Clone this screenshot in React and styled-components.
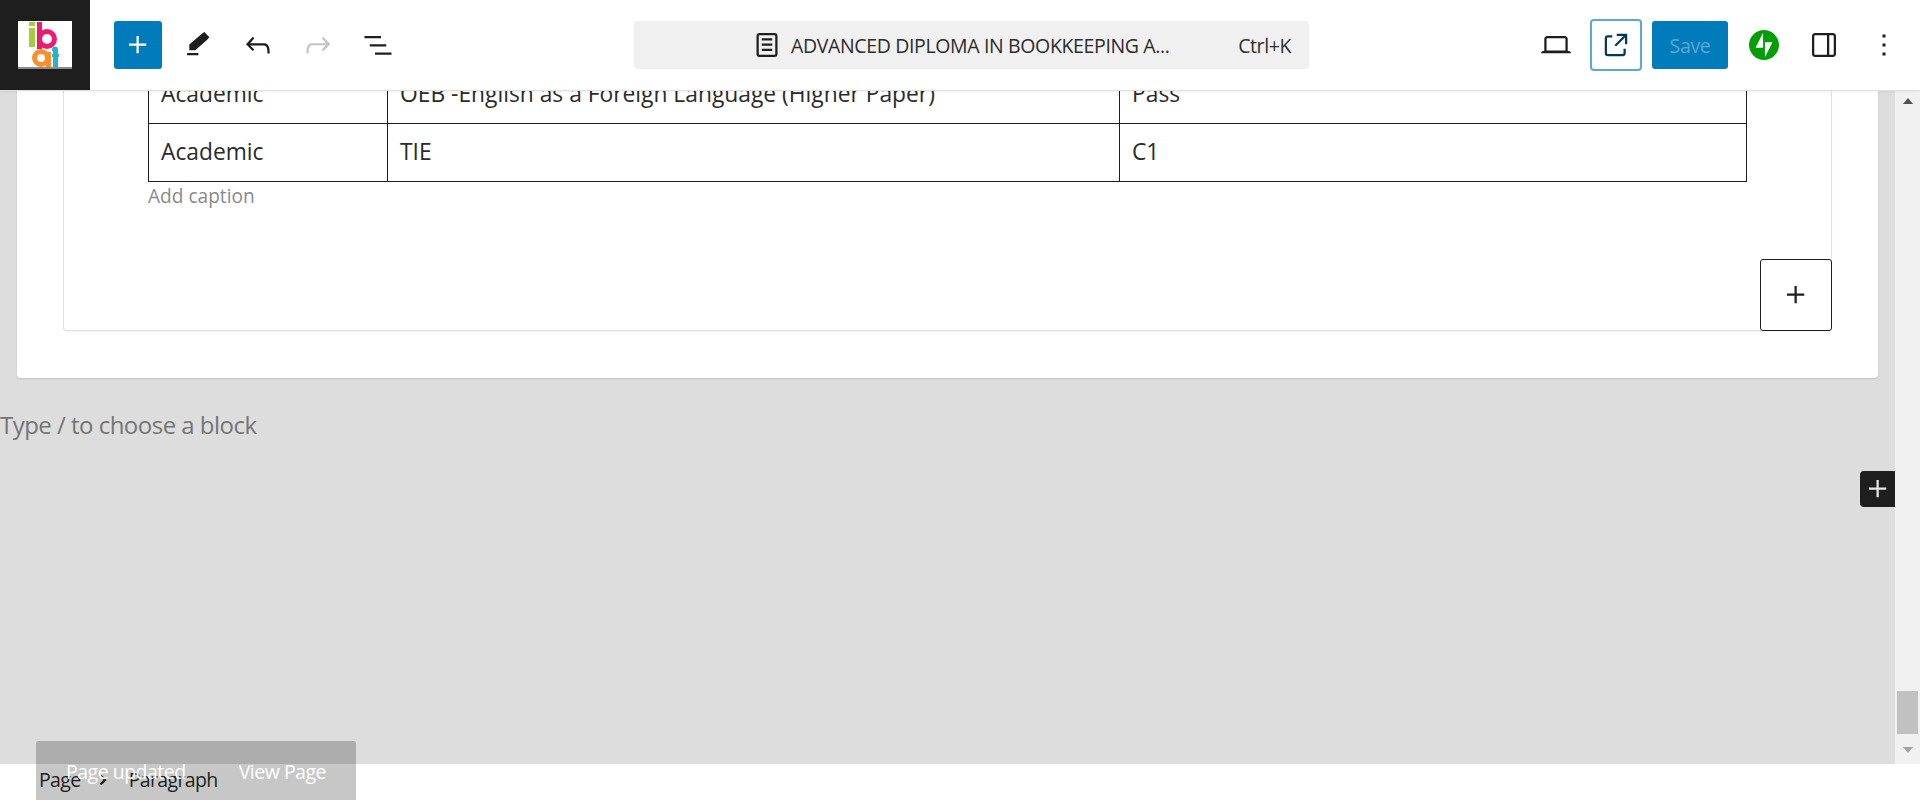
import React from 'react';
import styled, { createGlobalStyle } from 'styled-components';

const Global = createGlobalStyle`
  html, body { margin: 0; padding: 0; height: 100%; overflow: hidden; background: #fff; }
  * { box-sizing: border-box; }
`;

const Shell = styled.div`
  position: relative; width: 1920px; height: 800px; overflow: hidden;
  display: flex; flex-direction: column; font-family: "Open Sans", "Noto Sans", sans-serif; color: #1e1e1e;
`;
const Header = styled.header`
  height: 91px; flex: none; display: flex; align-items: flex-start; background: #fff;
  border-bottom: 1px solid #e0e0e0; box-shadow: 0 1px 2px rgba(0,0,0,.06); position: relative; z-index: 2;
`;
const LogoBox = styled.div`
  width: 90px; height: 90px; flex: none; background: #1e1e1e; display: flex; align-items: center; justify-content: center;
`;
const LogoSvg = styled.svg`
  width: 54px; height: 48px; display: block; filter: blur(.7px);
`;
const Tools = styled.div`
  display: flex; gap: 12px; margin: 21px 0 0 24px;
`;
const IconButton = styled.button`
  width: 48px; height: 48px; padding: 0; border: 0; border-radius: 3px; flex: none;
  display: flex; align-items: center; justify-content: center;
  background: ${p => p.$primary ? '#007cba' : 'transparent'};
  color: ${p => p.$primary ? '#fff' : p.$muted ? '#c4c4c4' : '#1e1e1e'};
  svg { width: 36px; height: 36px; fill: currentColor; display: block; }
`;
const CommandBar = styled.div`
  width: 675px; height: 48px; margin: 21px 0 0 232px; background: #f0f0f0; border-radius: 4px; flex: none;
  display: flex; align-items: center; padding-left: 115px; padding-right: 18px; font-size: 19.5px; letter-spacing: -.36px;
  color: #2b2b2b;
  svg { width: 36px; height: 36px; fill: #1e1e1e; flex: none; }
`;
const CommandTitle = styled.span`
  margin-left: 6px; flex: 1; white-space: nowrap;
`;
const Shortcut = styled.span`
  white-space: nowrap; letter-spacing: -.4px; color: #2f2f2f;
`;
const RightTools = styled.div`
  margin: 19px 12px 0 auto; height: 52px; display: flex; align-items: center;
`;
const PreviewButton = styled.button`
  width: 52px; height: 52px; margin-left: 10px; padding: 0; background: #fff; border: 2px solid #5aa8d4; border-radius: 4px;
  display: flex; align-items: center; justify-content: center; color: #043959;
  svg { width: 36px; height: 36px; fill: currentColor; }
`;
const SaveButton = styled.button`
  width: 76px; height: 48px; margin: 0 12px 0 10px; padding: 0; border: 0; border-radius: 3px; background: #007cba;
  color: #5ba6d4; font: 19.5px "Open Sans", sans-serif; letter-spacing: -.3px;
`;
const SpacedIcon = styled(IconButton)`
  margin-left: ${p => p.$gap || 0}px;
`;
const JetpackIcon = styled.svg`
  width: 30px !important; height: 30px !important; fill: #069e08 !important;
`;

const Body = styled.div`
  flex: 1; min-height: 0; display: flex;
`;
const Canvas = styled.main`
  position: relative; flex: 1; min-width: 0; background: #ddd; overflow: hidden;
`;
const ScrollContent = styled.div`
  margin-top: -60px;
`;
const Card = styled.section`
  margin: 0 17px; padding: 10px 46px 47px; background: #fff; border-radius: 0 0 4px 4px;
  box-shadow: 0 1px 2px rgba(0,0,0,.12);
`;
const Block = styled.div`
  position: relative; height: 290px; padding: 24px 84px 0; border: 1px solid #e0e0e0; border-top: 0;
  border-radius: 0 0 4px 4px; box-shadow: 0 1px 1px rgba(0,0,0,.05);
`;
const Table = styled.table`
  width: 1598px; table-layout: fixed; border-collapse: collapse; font-size: 22.8px; color: #2b2b2b;
`;
const Cell = styled.td`
  height: 58px; padding: 0 12px 1px; border: 1px solid #1e1e1e; line-height: 30px; white-space: nowrap;
  width: ${p => p.$w}px;
`;
const Caption = styled.div`
  margin-top: 1px; font-size: 19.1px; line-height: 26px; color: #8a8a8a;
`;
const Appender = styled.button`
  position: absolute; right: -1px; bottom: -1px; width: 72px; height: 72px; padding: 0; background: #fff;
  border: 1.5px solid #1e1e1e; border-radius: 3px; display: flex; align-items: center; justify-content: center;
  svg { width: 36px; height: 36px; fill: #1e1e1e; }
`;
const Placeholder = styled.p`
  margin: 30px 0 0; font-size: 24px; line-height: 33px; color: #757575; letter-spacing: -.52px;
`;
const SideInserter = styled.button`
  position: absolute; right: 0; top: 380px; width: 35px; height: 36px; padding: 0; background: #1e1e1e; border: 0;
  border-radius: 4px 0 0 4px; display: flex; align-items: center; justify-content: center;
  svg { width: 36px; height: 36px; fill: #e8e8e8; flex: none; }
`;
const Scrollbar = styled.div`
  width: 25px; flex: none; background: #f1f1f1; display: flex; flex-direction: column; align-items: center;
`;
const ArrowUp = styled.div`
  width: 0; height: 0; margin-top: 7px; border: 5.5px solid transparent; border-top: 0; border-bottom: 6px solid #505050;
`;
const Thumb = styled.div`
  width: 21px; height: 43px; margin-top: auto; background: #c1c1c1;
`;
const ArrowDown = styled.div`
  width: 0; height: 0; margin: 13px 0 11px; border: 5.5px solid transparent; border-bottom: 0; border-top: 6px solid #a3a3a3;
`;
const Footer = styled.footer`
  height: 36px; flex: none; background: #fff; padding: 0 0 5px 39px;
  display: flex; align-items: center; font-size: 19.5px; letter-spacing: -.62px; color: #1e1e1e;
`;
const Chevron = styled.svg`
  width: 14px; height: 14px; margin: 0 19px 0 15px; fill: none; stroke: #1e1e1e; stroke-width: 2.4;
`;
const Snackbar = styled.div`
  position: absolute; left: 36px; top: 741px; width: 320px; height: 64px; padding: 17px 30px 0; background: rgba(30,30,30,.25);
  border-radius: 3px; display: flex; align-items: flex-start; justify-content: space-between; z-index: 3;
  color: #fff; font-size: 19.5px; line-height: 27px; letter-spacing: -.5px;
`;

const Icon = ({ d }) => <svg viewBox="0 0 24 24" aria-hidden="true"><path d={d} /></svg>;
const PLUS = 'M11 12.5V17.5H12.5V12.5H17.5V11H12.5V6H11V11H6V12.5H11Z';

const Logo = () => (
  <LogoSvg viewBox="0 0 54 48">
    <rect width="54" height="48" fill="#fff" />
    <rect y="46" width="54" height="2" fill="#8c8c8c" />
    <rect x="11" y="1" width="6" height="4" fill="#a2cf3a" />
    <rect x="11" y="7" width="6" height="19" fill="#a2cf3a" />
    <rect x="19" y="1" width="5" height="27" fill="#ec1a72" />
    <circle cx="29" cy="18" r="7.5" fill="none" stroke="#ec1a72" strokeWidth="5" />
    <circle cx="23" cy="37" r="6.5" fill="none" stroke="#f7902a" strokeWidth="5" />
    <rect x="28" y="31" width="5" height="15" fill="#f7902a" />
    <rect x="35" y="29" width="5" height="17" fill="#25b3d0" />
    <circle cx="37" cy="28.5" r="3" fill="#25b3d0" />
    <rect x="34" y="33" width="7" height="3" fill="#25b3d0" />
  </LogoSvg>
);

export default function App() {
  return (
    <Shell>
      <Global />
      <Header>
        <LogoBox><Logo /></LogoBox>
        <Tools>
          <IconButton $primary><Icon d={PLUS} /></IconButton>
          <IconButton><Icon d="M4.75 17.25h7.5v1.5h-7.5zM16.2 3.4l3.4 3.4-1.3 1.5-8.1 7.2H6.2V11.6l8.6-7.2z" /></IconButton>
          <IconButton><Icon d="M18.3 11.7c-.6-.6-1.4-.9-2.3-.9H6.7l2.9-3.3-1.1-1-4.5 5L8.5 16l1-1-2.7-2.7H16c.5 0 .9.2 1.3.5 1 1 1 3.4 1 4.5v.3h1.5v-.2c0-1.5 0-4.3-1.5-5.7z" /></IconButton>
          <IconButton $muted><Icon d="M15.6 6.5l-1.1 1 2.9 3.3H8c-.9 0-1.7.3-2.3.9-1.4 1.5-1.4 4.2-1.4 5.6v.2h1.5v-.3c0-1.1 0-3.5 1-4.5.3-.3.7-.5 1.3-.5h9.2L14.5 15l1.1 1.1 4.6-4.6-4.6-5z" /></IconButton>
          <IconButton><Icon d="M3 6h11v1.5H3V6Zm3.5 5.5h11V13h-11v-1.5ZM21 17H10v1.5h11V17Z" /></IconButton>
        </Tools>
        <CommandBar>
          <Icon d="M15.5 7.5h-7V9h7V7.5Zm-7 3.5h7v1.5h-7V11Zm7 3.5h-7V16h7v-1.5Z M17 4H7a2 2 0 0 0-2 2v12a2 2 0 0 0 2 2h10a2 2 0 0 0 2-2V6a2 2 0 0 0-2-2ZM7 5.5h10a.5.5 0 0 1 .5.5v12a.5.5 0 0 1-.5.5H7a.5.5 0 0 1-.5-.5V6a.5.5 0 0 1 .5-.5Z" />
          <CommandTitle>ADVANCED DIPLOMA IN BOOKKEEPING A...</CommandTitle>
          <Shortcut>Ctrl+K</Shortcut>
        </CommandBar>
        <RightTools>
          <IconButton><Icon d="M20.5 16h-.7V8c0-1.1-.9-2-2-2H6.2c-1.1 0-2 .9-2 2v8h-.7c-.8 0-1.5.7-1.5 1.5h20c0-.8-.7-1.5-1.5-1.5zM5.7 8c0-.3.2-.5.5-.5h11.6c.3 0 .5.2.5.5v7.6H5.7V8z" /></IconButton>
          <PreviewButton><Icon d="M19.5 4.5h-7V6h4.44l-5.97 5.97 1.06 1.06L18 7.06v4.44h1.5v-7Zm-13 1a2 2 0 0 0-2 2v10a2 2 0 0 0 2 2h10a2 2 0 0 0 2-2v-3H17v3a.5.5 0 0 1-.5.5h-10a.5.5 0 0 1-.5-.5v-10a.5.5 0 0 1 .5-.5h3V5.5h-3Z" /></PreviewButton>
          <SaveButton>Save</SaveButton>
          <IconButton>
            <JetpackIcon viewBox="0 0 32 32"><path d="M16 0C7.2 0 0 7.2 0 16s7.2 16 16 16 16-7.2 16-16S24.8 0 16 0zM15 19H7l8-16v16zM17 29V13h8L17 29z" /></JetpackIcon>
          </IconButton>
          <SpacedIcon $gap={12}><Icon d="M18 4H6c-1.1 0-2 .9-2 2v12c0 1.1.9 2 2 2h12c1.1 0 2-.9 2-2V6c0-1.1-.9-2-2-2zm-4 14.5H6c-.3 0-.5-.2-.5-.5V6c0-.3.2-.5.5-.5h8v13zm4.5-.5c0 .3-.2.5-.5.5h-2.5v-13H18c.3 0 .5.2.5.5v12z" /></SpacedIcon>
          <SpacedIcon $gap={12}><Icon d="M13 19h-2v-2h2v2zm0-6h-2v-2h2v2zm0-6h-2V5h2v2z" /></SpacedIcon>
        </RightTools>
      </Header>
      <Body>
        <Canvas>
          <ScrollContent>
            <Card>
              <Block>
                <Table>
                  <tbody>
                    <tr>
                      <Cell $w={239}>Academic</Cell>
                      <Cell $w={732}>OEB -English as a Foreign Language (Higher Paper)</Cell>
                      <Cell $w={627}>Pass</Cell>
                    </tr>
                    <tr>
                      <Cell $w={239}>Academic</Cell>
                      <Cell $w={732}>TIE</Cell>
                      <Cell $w={627}>C1</Cell>
                    </tr>
                  </tbody>
                </Table>
                <Caption>Add caption</Caption>
                <Appender><Icon d={PLUS} /></Appender>
              </Block>
            </Card>
            <Placeholder>Type / to choose a block</Placeholder>
          </ScrollContent>
          <SideInserter><Icon d={PLUS} /></SideInserter>
        </Canvas>
        <Scrollbar>
          <ArrowUp />
          <Thumb />
          <ArrowDown />
        </Scrollbar>
      </Body>
      <Footer>
        <span>Page</span>
        <Chevron viewBox="0 0 14 14"><path d="M4.5 2.5 9 7l-4.5 4.5" /></Chevron>
        <span>Paragraph</span>
      </Footer>
      <Snackbar>
        <span>Page updated</span>
        <span>View Page</span>
      </Snackbar>
    </Shell>
  );
}
